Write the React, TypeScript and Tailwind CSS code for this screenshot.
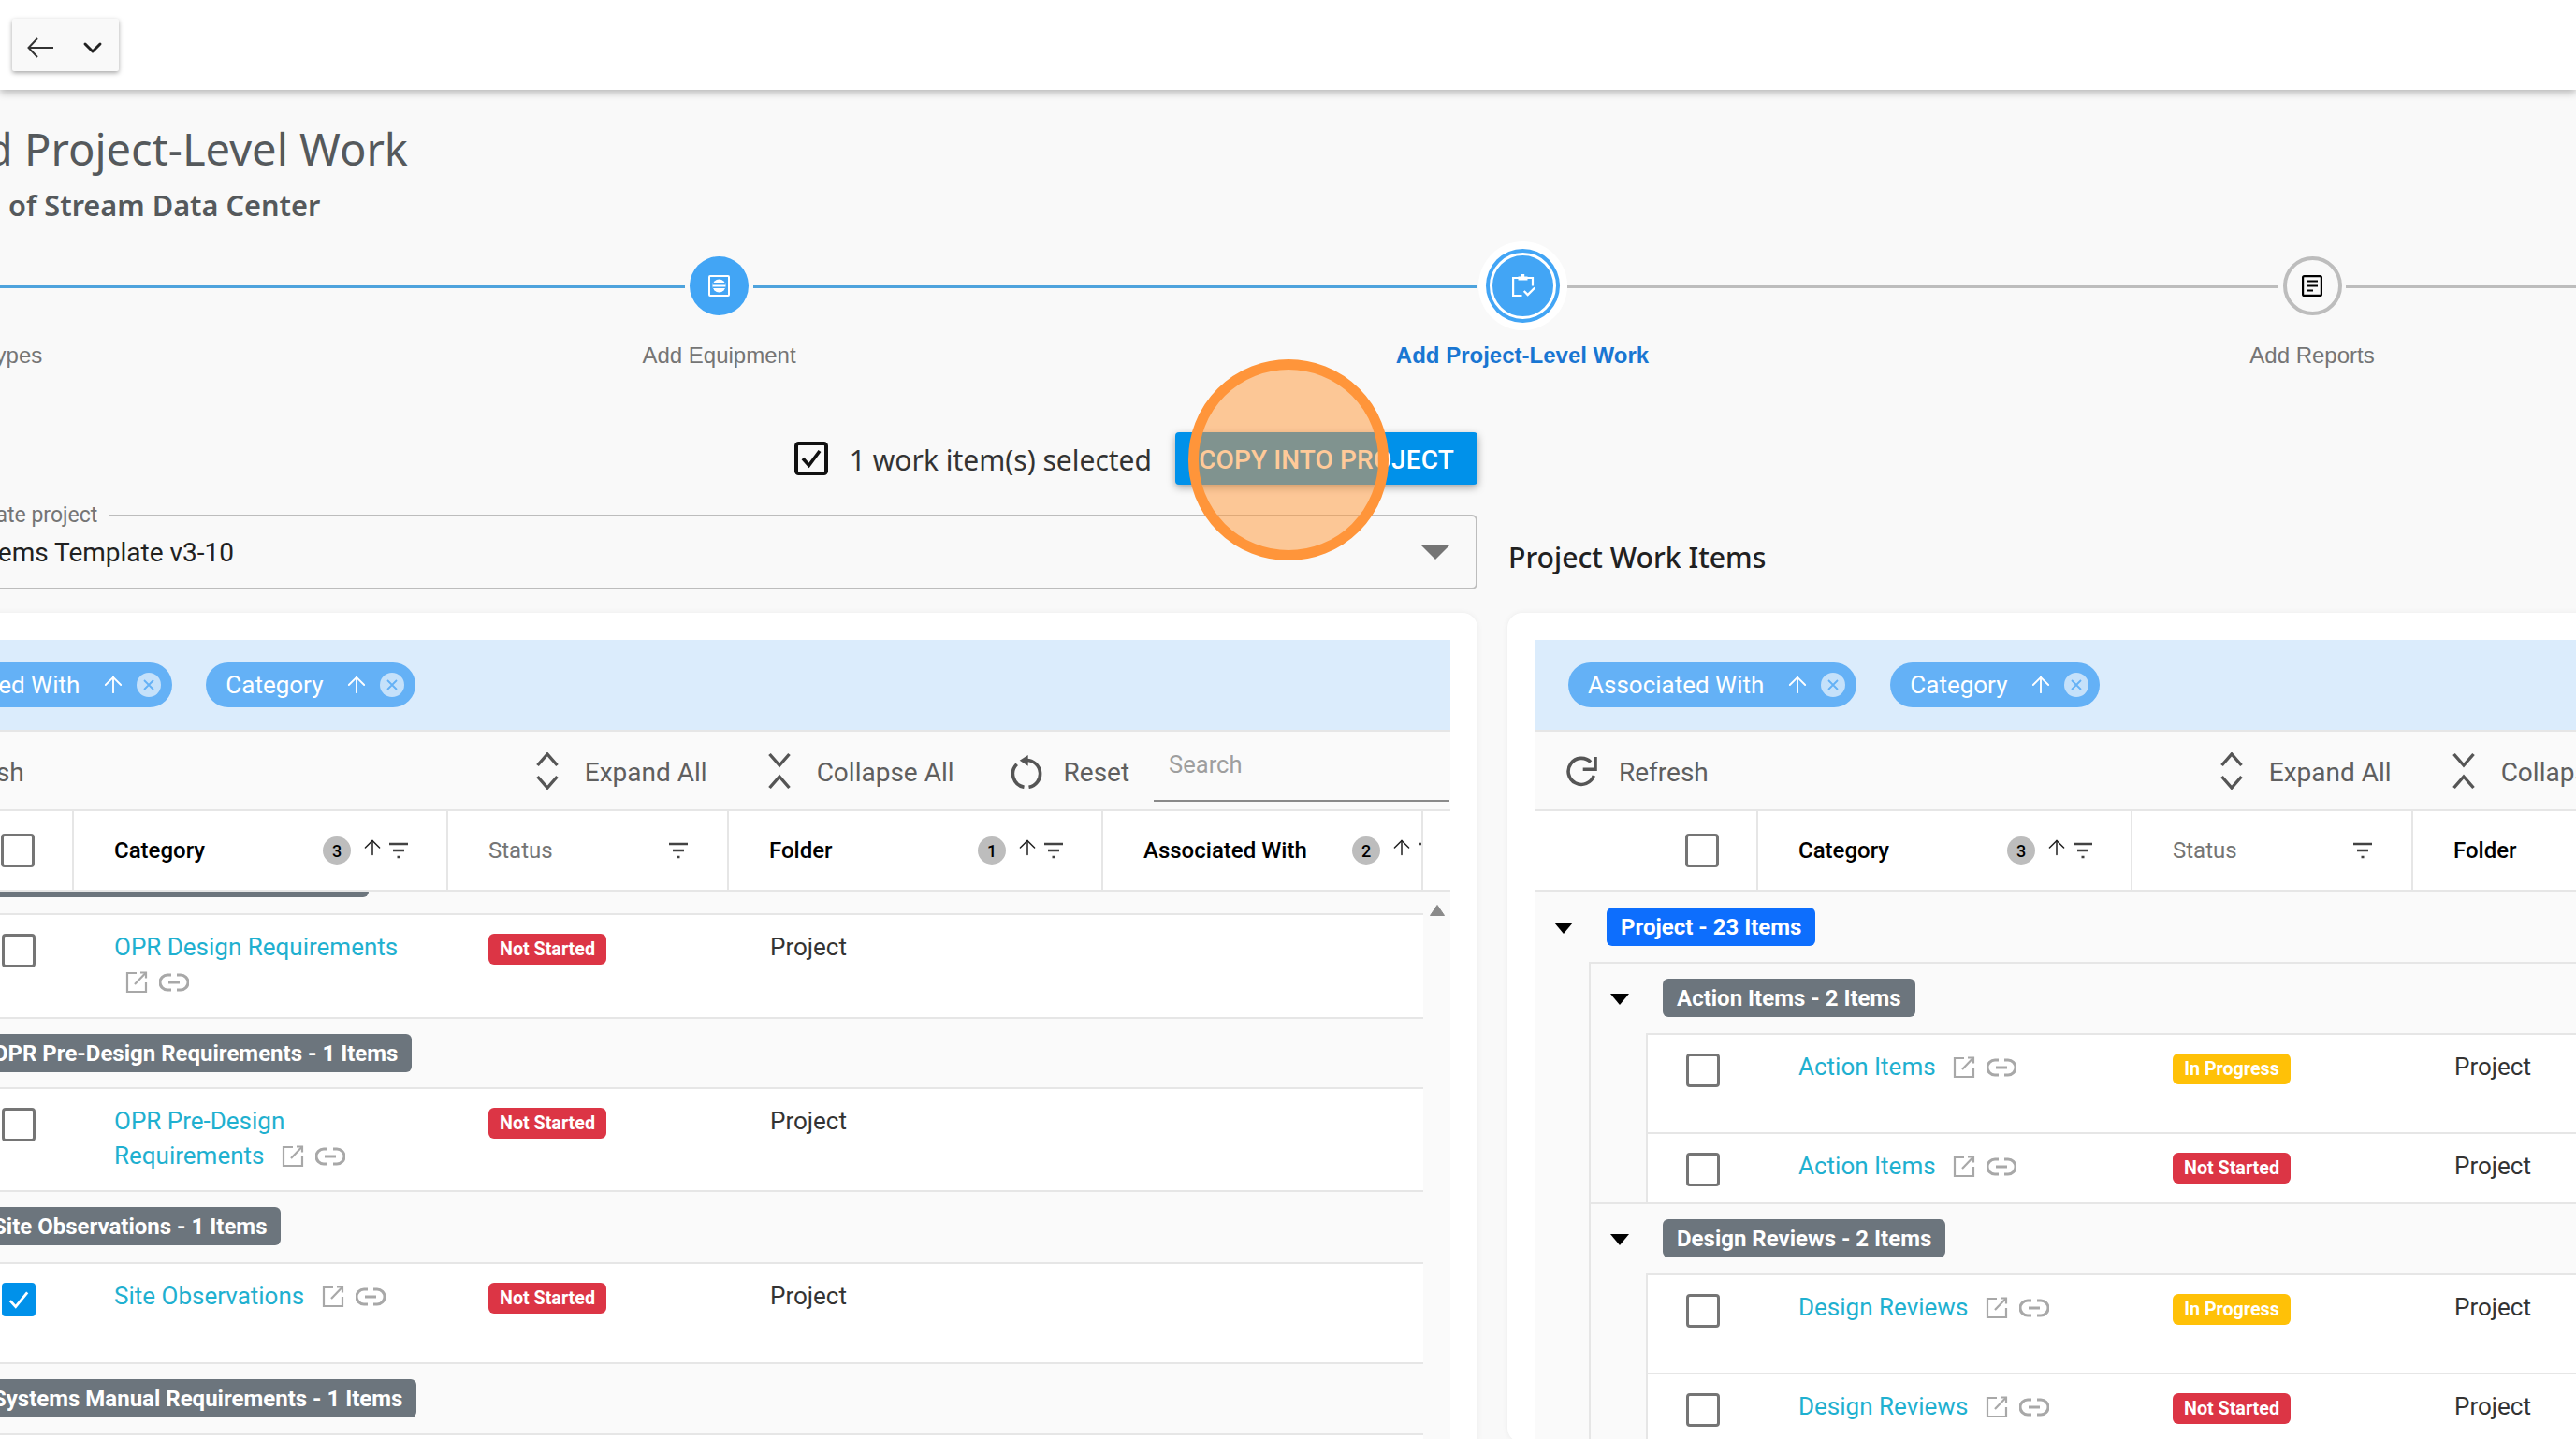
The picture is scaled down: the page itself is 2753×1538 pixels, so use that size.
import { ArrowUp, ChevronDown } from "lucide-react";

type RowData = { name: string; status: "Not Started" | "In Progress"; checked?: boolean; height: string };

const Checkbox = ({ checked = false }: { checked?: boolean }) =>
  checked ? (
    <span className="flex h-[36px] w-[36px] shrink-0 items-center justify-center rounded-[4px] bg-[#0091ea]">
      <svg width="26" height="26" viewBox="0 0 24 24" fill="none" stroke="white" strokeWidth="2.6">
        <path d="M3.5 13l5.5 6L20.5 5" />
      </svg>
    </span>
  ) : (
    <span className="h-[36px] w-[36px] shrink-0 rounded-[4px] border-[3px] border-[#757575] bg-white" />
  );

const ExpandIcon = ({ collapse = false }: { collapse?: boolean }) => (
  <svg width="24" height="40" viewBox="0 0 24 40" fill="none" stroke="#555555" strokeWidth="3.4" className="shrink-0">
    {collapse ? (
      <>
        <path d="M1.5 2l10.5 12L22.5 2" />
        <path d="M1.5 38l10.5-12 10.5 12" />
      </>
    ) : (
      <>
        <path d="M1.5 14L12 2l10.5 12" />
        <path d="M1.5 26L12 38l10.5-12" />
      </>
    )}
  </svg>
);

const RefreshIcon = () => (
  <svg width="34" height="34" viewBox="0 0 34 34" fill="none" stroke="#555555" strokeWidth="3.6" className="shrink-0">
    <path d="M30.3 22A14 14 0 1 1 27 7.5" />
    <path d="M32 2v13.3H18.7" />
  </svg>
);

const ResetIcon = () => (
  <svg width="34" height="38" viewBox="0 0 34 38" fill="none" stroke="#555555" strokeWidth="3.6" className="shrink-0">
    <path d="M14.5 36.3A14.5 14.5 0 0 1 6.7 11.8" />
    <path d="M19.5 36.3A14.5 14.5 0 0 0 17 7.5" />
    <polygon points="9.7,7.7 18.7,2 18.7,13.7" fill="#555555" stroke="none" />
  </svg>
);

const FilterIcon = () => (
  <svg width="20" height="18" viewBox="0 0 20 18" fill="none" stroke="#424242" strokeWidth="2.4" className="shrink-0">
    <path d="M0 2h20M4 9h12M8.5 16h3" />
  </svg>
);

const ExternalIcon = () => (
  <svg width="24" height="24" viewBox="0 0 24 24" fill="none" stroke="#a8a8a8" strokeWidth="2.2" className="shrink-0">
    <path d="M12 2H2v20h20V12" />
    <path d="M10 14L22 1.5" />
    <path d="M16 1.5h6v6" />
  </svg>
);

const LinkIcon = () => (
  <svg width="32" height="20" viewBox="0 0 32 20" fill="none" stroke="#a8a8a8" strokeWidth="3" className="shrink-0">
    <path d="M13 2H9a8 8 0 0 0 0 16h4" />
    <path d="M19 2h4a8 8 0 0 1 0 16h-4" />
    <path d="M10 10h12" />
  </svg>
);

const Triangle = () => (
  <svg width="20" height="12" viewBox="0 0 20 12" className="shrink-0">
    <polygon points="0,0 20,0 10,12" fill="#000" />
  </svg>
);

const Chip = ({ label }: { label: string }) => (
  <div className="flex h-[48px] items-center whitespace-nowrap rounded-full bg-[#64b1f6] pl-[21px] pr-[12px] text-[26px] text-white">
    <span>{label}</span>
    <ArrowUp className="ml-[22px] h-[28px] w-[28px]" strokeWidth={1.6} />
    <span className="ml-[11px] flex h-[26px] w-[26px] items-center justify-center rounded-full bg-[#c5e1fa]">
      <svg width="14" height="14" viewBox="0 0 14 14" fill="none" stroke="#64b1f6" strokeWidth="1.8">
        <path d="M2 2l10 10M12 2L2 12" />
      </svg>
    </span>
  </div>
);

const Toolbar = () => (
  <div className="flex h-[85px] items-center whitespace-nowrap border-b-2 border-[#e6e6e6] bg-[#fafafa] text-[28px] text-[#5f5f5f]">
    <div className="flex shrink-0 items-center gap-[23px] pl-[33px]">
      <RefreshIcon />
      <span className="pt-[4px]">Refresh</span>
    </div>
    <div className="ml-[547px] flex shrink-0 items-center gap-[28px]">
      <ExpandIcon />
      <span className="pt-[4px]">Expand All</span>
    </div>
    <div className="ml-[65px] flex shrink-0 items-center gap-[28px]">
      <ExpandIcon collapse />
      <span className="pt-[4px]">Collapse All</span>
    </div>
    <div className="ml-[60px] flex shrink-0 items-center gap-[23px]">
      <ResetIcon />
      <span className="pt-[4px]">Reset</span>
    </div>
    <div className="ml-[26px] flex h-[75px] w-[316px] shrink-0 items-center self-start border-b-2 border-[#8a8a8a] pb-[2px] pl-[16px] text-[25.5px] text-[#9e9e9e]">
      Search
    </div>
  </div>
);

const HeaderCell = ({ width, textWidth, label, badge, dark = true }: { width: string; textWidth: string; label: string; badge?: number; dark?: boolean }) => (
  <div className={`flex h-full shrink-0 items-center overflow-hidden border-r-2 border-[#e6e6e6] pl-[43px] ${width}`}>
    <span className={`shrink-0 whitespace-nowrap text-[24px] ${textWidth} ${dark ? "font-medium text-black" : "text-[#757575]"}`}>{label}</span>
    {badge && (
      <span className="flex h-[30px] w-[30px] shrink-0 items-center justify-center rounded-full bg-[#bdbdbd] text-[18px] font-medium text-black">{badge}</span>
    )}
    {badge && <ArrowUp className="mb-[6px] ml-[10px] h-[26px] w-[26px] shrink-0 text-[#212121]" strokeWidth={1.4} />}
    <span className={badge ? "ml-[5px] flex" : "flex"}>
      <FilterIcon />
    </span>
  </div>
);

const HeaderRow = () => (
  <div className="flex h-[86px] border-b-2 border-[#e6e6e6] bg-white">
    <div className="flex h-full w-[239px] shrink-0 items-center justify-end border-r-2 border-[#e6e6e6] pr-[40px]">
      <Checkbox />
    </div>
    <HeaderCell width="w-[400px]" textWidth="w-[223px]" label="Category" badge={3} />
    <HeaderCell width="w-[300px]" textWidth="w-[193px]" label="Status" dark={false} />
    <HeaderCell width="w-[400px]" textWidth="w-[223px]" label="Folder" badge={1} />
    <HeaderCell width="w-[342px]" textWidth="w-[223px]" label="Associated With" badge={2} />
  </div>
);

const GroupRow = ({ label, color = "bg-[#6c757d]", height, border = true }: { label: string; color?: string; height: string; border?: boolean }) => (
  <div className={`flex items-start bg-[#fafafa] pl-[21px] ${height} ${border ? "border-t-2 border-[#e6e6e6] pt-[16px]" : "pt-[17px]"}`}>
    <span className="mt-[16px]">
      <Triangle />
    </span>
    <span className={`ml-[36px] flex h-[41px] items-center whitespace-nowrap rounded-[6px] px-[15px] text-[24px] font-bold text-white ${color}`}>{label}</span>
  </div>
);

const Row = ({ name, status, checked, height }: RowData) => (
  <div className={`flex items-start border-t-2 border-[#e6e6e6] bg-white pt-[20px] ${height}`}>
    <div className="flex w-[118px] shrink-0 justify-end pr-[41px]">
      <Checkbox checked={checked} />
    </div>
    <div className="-mt-[4px] w-[400px] shrink-0 pl-[43px] pr-[44px] text-[26px] leading-[37px] text-[#1fb0d0]">
      {name}{" "}
      <span className="ml-[12px] inline-flex items-center gap-[12px] align-[-4px]">
        <ExternalIcon />
        <LinkIcon />
      </span>
    </div>
    <div className="w-[300px] shrink-0 pl-[43px]">
      <span className={`flex h-[33px] w-[126px] items-center justify-center rounded-[6px] text-[19.7px] font-bold text-white ${status === "Not Started" ? "bg-[#dc3545]" : "bg-[#ffc107]"}`}>{status}</span>
    </div>
    <div className="-mt-[4px] pl-[44px] text-[26px] leading-[37px] text-[#333333]">Project</div>
  </div>
);

const Panel = ({ children }: { children: React.ReactNode }) => (
  <div className="w-[1768px] rounded-[16px] bg-white px-[29px] pt-[29px] shadow-[0_0_6px_rgba(0,0,0,0.06)]">
    <div className="flex h-[98px] items-center gap-[36px] border-b-2 border-[#e6e6e6] bg-[#dbecfc] pl-[36px]">
      <Chip label="Associated With" />
      <Chip label="Category" />
    </div>
    <Toolbar />
    <HeaderRow />
    <div className="flex bg-[#fafafa]">
      <div className="w-[1681px] shrink-0">{children}</div>
      <div className="flex w-[29px] shrink-0 justify-center pt-[14px]">
        <svg width="16" height="12" viewBox="0 0 16 12">
          <path d="M8 0.5L15.5 11.5H0.5z" fill="#8a8a8a" stroke="#8a8a8a" strokeLinejoin="round" />
        </svg>
      </div>
    </div>
  </div>
);

const Step = ({ width, circle, label, labelClass = "text-[#757575]" }: { width: string; circle: React.ReactNode; label: string; labelClass?: string }) => (
  <div className={`flex shrink-0 flex-col items-center ${width}`}>
    <div className="flex h-[95px] items-center justify-center">{circle}</div>
    <span className={`mt-[13px] whitespace-nowrap font-['Liberation_Sans',sans-serif] text-[24px] leading-[28px] ${labelClass}`}>{label}</span>
  </div>
);

const Stepper = () => (
  <div className="-ml-[105px] flex w-[3000px] items-start">
    <Step width="w-[72px]" circle={<span className="h-[63px] w-[63px] rounded-full bg-[#42a5f5]" />} label="Add Work Item Types" />
    <div className="mt-[47px] h-[3px] w-[765px] bg-[#4ea3dd]" />
    <Step
      width="w-[73px]"
      label="Add Equipment"
      circle={
        <span className="flex h-[63px] w-[63px] items-center justify-center rounded-full bg-[#42a5f5]">
          <svg width="23" height="23" viewBox="0 0 23 23">
            <rect x="1" y="1" width="21" height="21" rx="1" fill="none" stroke="white" strokeWidth="2" />
            <circle cx="11.5" cy="11.5" r="7" fill="white" />
            <path d="M5 9.8h13M5 13.2h13" stroke="#42a5f5" strokeWidth="1.5" />
          </svg>
        </span>
      }
    />
    <div className="mt-[47px] h-[3px] w-[774px] bg-[#4ea3dd]" />
    <Step
      width="w-[96px]"
      label="Add Project-Level Work"
      labelClass="font-bold text-[#1976d2]"
      circle={
        <span className="flex h-[95px] w-[95px] items-center justify-center rounded-full bg-white">
          <span className="flex h-[79px] w-[79px] items-center justify-center rounded-full bg-[#42a5f5]">
            <span className="flex h-[71px] w-[71px] items-center justify-center rounded-full border-[3px] border-white">
              <svg width="26" height="26" viewBox="0 0 26 26" fill="none" stroke="white" strokeWidth="2.2" className="mb-[2px] ml-[3px]">
                <path d="M10.5 24H1.1V5H7M16 5h6v8.500" />
                <path d="M6.500 7.500V3.500h3.300V1h3.400v2.500h3.300v4z" fill="white" stroke="none" />
                <path d="M12.7 19l4 4 7.600-7.500" strokeWidth="2.400" />
              </svg>
            </span>
          </span>
        </span>
      }
    />
    <div className="mt-[47px] h-[3px] w-[760px] bg-[#bdbdbd]" />
    <Step
      width="w-[72px]"
      label="Add Reports"
      circle={
        <span className="flex h-[63px] w-[63px] items-center justify-center rounded-full border-[4px] border-[#bdbdbd]">
          <svg width="22" height="23" viewBox="0 0 22 23" fill="none" stroke="#000" strokeWidth="2.2">
            <rect x="1.1" y="1.1" width="19.8" height="20.8" rx="1.5" />
            <path d="M5 6.5h12M5 11.5h12M5 16.5h7" />
          </svg>
        </span>
      }
    />
    <div className="mt-[47px] h-[3px] flex-1 bg-[#bdbdbd]" />
  </div>
);

const leftRows = {
  design: { name: "OPR Design Requirements", status: "Not Started", height: "h-[111px]" },
  preDesign: { name: "OPR Pre-Design Requirements", status: "Not Started", height: "h-[110px]" },
  site: { name: "Site Observations", status: "Not Started", checked: true, height: "h-[107px]" },
} satisfies Record<string, RowData>;

export default function App() {
  return (
    <div className="relative h-[1538px] w-[2753px] overflow-hidden bg-[#f9f9f9] font-['Roboto',sans-serif]">
      <div className="relative z-10 flex h-[96px] items-start bg-white pl-[13px] pt-[20px] shadow-[0_3px_8px_rgba(0,0,0,0.28)]">
        <div className="flex h-[56px] w-[114px] items-center rounded-[2px] bg-[#f9f9f9] pl-[16px] pt-[6px] shadow-[0_2px_5px_rgba(0,0,0,0.35)]">
          <svg width="28" height="22" viewBox="0 0 28 22" fill="none" stroke="#333333" strokeWidth="2">
            <path d="M28 11H2" />
            <path d="M11 1L1.5 11 11 21" />
          </svg>
          <ChevronDown className="ml-[26px] h-[32px] w-[32px] text-[#222222]" strokeWidth={2.2} />
        </div>
      </div>

      <div className="mt-[31px] flex h-[64px] w-[436px] items-center justify-end whitespace-nowrap font-['Noto_Sans',sans-serif] text-[47.1px] leading-[64px] text-[#55595c]">
        Add Project-Level Work
      </div>
      <div className="ml-[9px] mt-[6px] whitespace-nowrap font-['Noto_Sans',sans-serif] text-[30.7px] font-semibold leading-[44px] text-[#55595c]">of Stream Data Center</div>

      <div className="mt-[17px]">
        <Stepper />
      </div>

      <div className="-ml-[189px] mt-[68px] flex w-[3600px] gap-[32px]">
        <div className="w-[1768px] shrink-0">
          <div className="flex h-[56px] items-center justify-end">
            <svg width="36" height="36" viewBox="0 0 36 36" fill="none" stroke="#111111" strokeWidth="4">
              <rect x="2" y="2" width="32" height="32" rx="2.5" />
              <path d="M9 18l6.500 7.500L27 10" strokeWidth="3.600" />
            </svg>
            <span className="ml-[23px] pt-[2px] font-['Noto_Sans',sans-serif] text-[30px] text-[#333333]">1 work item(s) selected</span>
            <button className="ml-[25px] flex h-[56px] w-[323px] items-center justify-center rounded-[4px] bg-[#0091ea] pt-[4px] text-[28px] font-medium tracking-[0.1px] text-white shadow-[0_3px_8px_rgba(0,0,0,0.35)]">
              COPY INTO PROJECT
            </button>
          </div>

          <div className="relative mt-[32px] flex h-[80px] items-center rounded-[6px] border-2 border-[#bdbdbd] pl-[97px] pr-[28px]">
            <span className="absolute -top-[15px] left-[107px] bg-[#f9f9f9] px-[12px] text-[23px] leading-[28px] text-[#757575]">Template project</span>
            <span className="pt-[2px] text-[28px] text-[#212121]">Work Items Template v3-10</span>
            <svg width="30" height="15" viewBox="0 0 30 15" className="ml-auto">
              <polygon points="0,0 30,0 15,15" fill="#757575" />
            </svg>
          </div>

          <div className="mt-[25px]">
            <Panel>
              <div className="ml-[58px] border-l-2 border-[#e6e6e6]">
                <div className="h-[23px] pl-[77px]">
                  <div className="h-[6px] w-[417px] rounded-b-[6px] bg-[#6c757d]" />
                </div>
                <div className="ml-[59px] border-l-2 border-[#e6e6e6]">
                  <Row {...leftRows.design} />
                </div>
                <GroupRow label="OPR Pre-Design Requirements - 1 Items" height="h-[75px]" />
                <div className="ml-[59px] border-l-2 border-[#e6e6e6]">
                  <Row {...leftRows.preDesign} />
                </div>
                <GroupRow label="Site Observations - 1 Items" height="h-[77px]" />
                <div className="ml-[59px] border-l-2 border-[#e6e6e6]">
                  <Row {...leftRows.site} />
                </div>
                <GroupRow label="Systems Manual Requirements - 1 Items" height="h-[76px]" />
                <div className="h-[20px] border-t-2 border-[#e6e6e6] bg-white" />
              </div>
            </Panel>
          </div>
        </div>

        <div className="w-[1768px] shrink-0">
          <div className="flex h-[168px] items-end pb-[12px] pl-[1px] font-['Noto_Sans',sans-serif] text-[30.2px] font-medium leading-[44px] text-[#212121]">Project Work Items</div>
          <div className="mt-[25px]">
            <Panel>
              <GroupRow label="Project - 23 Items" color="bg-[#0d6efd]" height="h-[75px]" border={false} />
              <div className="ml-[58px] border-l-2 border-[#e6e6e6]">
                <GroupRow label="Action Items - 2 Items" height="h-[76px]" />
                <div className="ml-[59px] border-l-2 border-[#e6e6e6]">
                  <Row name="Action Items" status="In Progress" height="h-[106px]" />
                  <Row name="Action Items" status="Not Started" height="h-[75px]" />
                </div>
                <GroupRow label="Design Reviews - 2 Items" height="h-[76px]" />
                <div className="ml-[59px] border-l-2 border-[#e6e6e6]">
                  <Row name="Design Reviews" status="In Progress" height="h-[106px]" />
                  <Row name="Design Reviews" status="Not Started" height="h-[75px]" />
                </div>
              </div>
            </Panel>
          </div>
        </div>
      </div>

      <div className="absolute left-[1270px] top-[384px] z-20 h-[215px] w-[214px] rounded-full border-[11px] border-[#ff953a] bg-[#ff9433]/50" />
    </div>
  );
}
